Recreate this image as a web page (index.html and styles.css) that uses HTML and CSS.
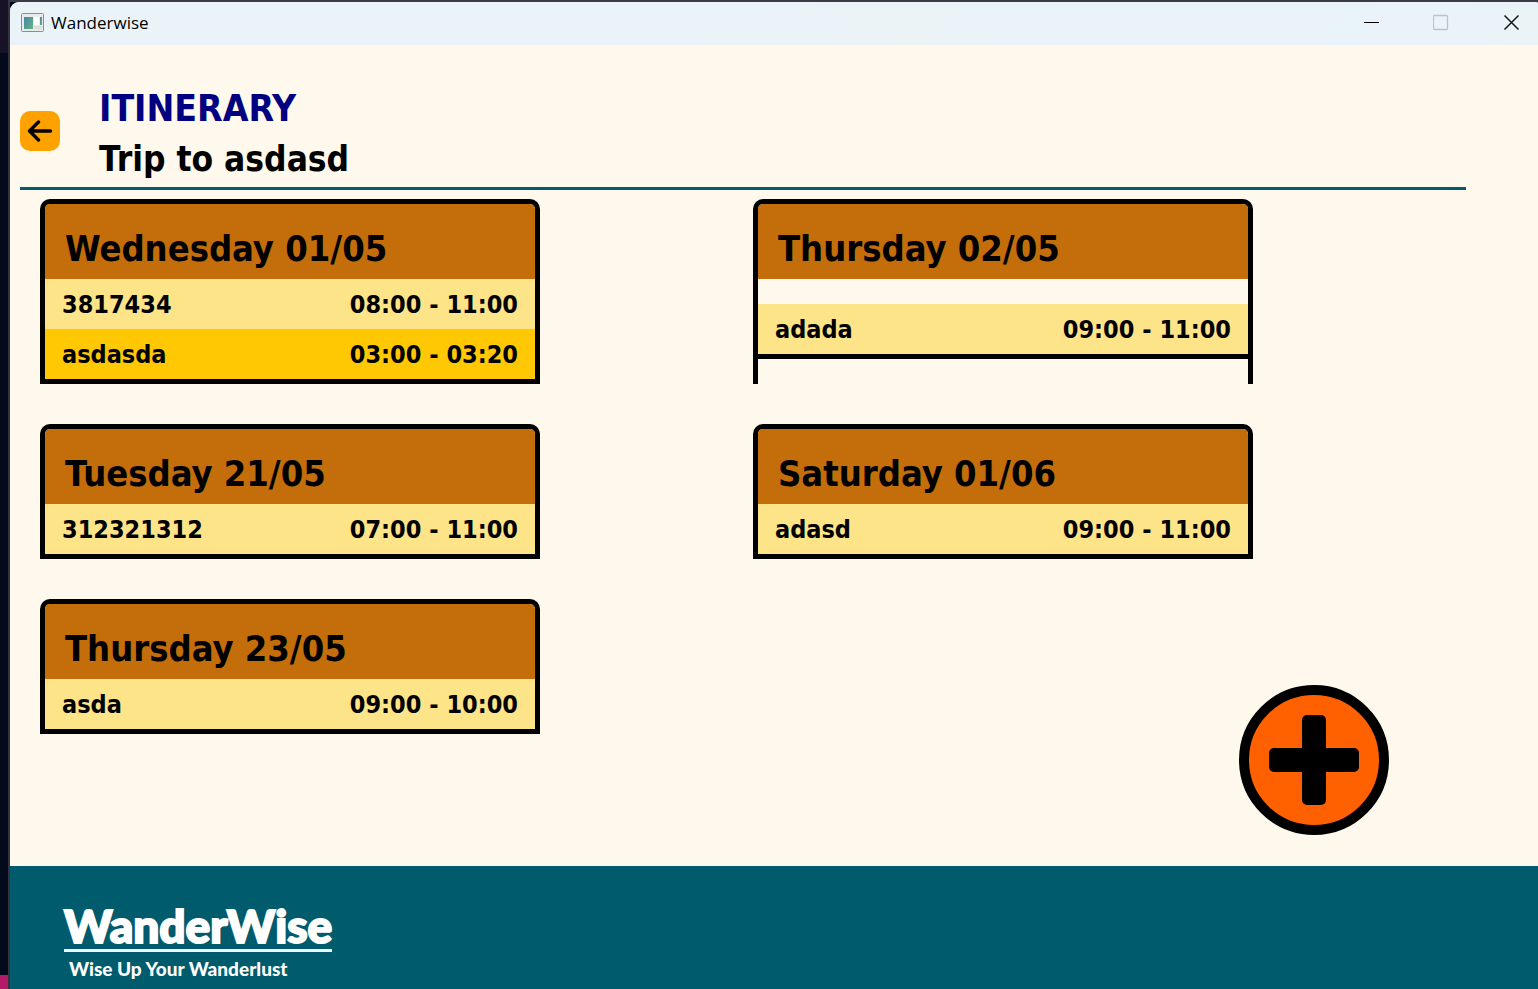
FILE: index.html
```html
<!DOCTYPE html>
<html lang="en">
<head>
<meta charset="utf-8">
<title>Wanderwise</title>
<link rel="stylesheet" href="styles.css">
</head>
<body>
<div class="window">
  <div class="titlebar">
    <svg class="app-icon" width="23" height="19" viewBox="0 0 23 19" aria-hidden="true">
      <defs>
        <linearGradient id="pane" x1="0" y1="0" x2="1" y2="1">
          <stop offset="0" stop-color="#4a86a8"/>
          <stop offset="1" stop-color="#63b286"/>
        </linearGradient>
      </defs>
      <rect x="0.5" y="0.5" width="22" height="18" rx="1" fill="#e9eaea" stroke="#8b8e90"/>
      <rect x="3" y="4" width="9" height="12" fill="url(#pane)"/>
      <rect x="13" y="4" width="5" height="8" fill="#fff"/>
      <rect x="19" y="4" width="2" height="8" fill="url(#pane)"/>
      <rect x="13" y="13" width="8" height="3" fill="#dcdddd"/>
    </svg>
    <span class="app-name">Wanderwise</span>
    <div class="controls">
      <button type="button" aria-label="Minimize"><svg width="17" height="17" viewBox="0 0 17 17"><path d="M1 8.500H16" stroke="#000"/></svg></button>
      <button type="button" aria-label="Maximize" disabled><svg width="17" height="17" viewBox="0 0 17 17"><rect x="0.500" y="1.500" width="14" height="14" rx="1" fill="none" stroke="#bcc4c6" stroke-width="1.300"/></svg></button>
      <button type="button" aria-label="Close"><svg width="17" height="17" viewBox="0 0 17 17"><path d="M1.500 1.500L15.500 15.500M15.500 1.500L1.500 15.500" stroke="#15171c" stroke-width="1.500"/></svg></button>
    </div>
  </div>

  <main class="content">
    <header class="page-header">
      <button class="back" type="button" aria-label="Back">
        <svg width="26" height="22" viewBox="0 0 26 22" fill="none" stroke="#000" stroke-width="3.400" stroke-linecap="round" stroke-linejoin="round"><path d="M23.500 11H3M11.500 2L2.500 11L11.500 20"/></svg>
      </button>
      <div class="headings">
        <h1 class="heading section">ITINERARY</h1>
        <p class="heading">Trip to asdasd</p>
      </div>
    </header>

    <div class="days">
      <section class="day">
        <h2 class="day-title">Wednesday 01/05</h2>
        <ul class="entries">
          <li class="entry"><span>3817434</span><span>08:00 - 11:00</span></li>
          <li class="entry"><span>asdasda</span><span>03:00 - 03:20</span></li>
        </ul>
      </section>
      <section class="day">
        <h2 class="day-title">Thursday 02/05</h2>
        <ul class="entries">
          <li class="entry"><span>adada</span><span>09:00 - 11:00</span></li>
        </ul>
      </section>
      <section class="day">
        <h2 class="day-title">Tuesday 21/05</h2>
        <ul class="entries">
          <li class="entry"><span>312321312</span><span>07:00 - 11:00</span></li>
        </ul>
      </section>
      <section class="day">
        <h2 class="day-title">Saturday 01/06</h2>
        <ul class="entries">
          <li class="entry"><span>adasd</span><span>09:00 - 11:00</span></li>
        </ul>
      </section>
      <section class="day">
        <h2 class="day-title">Thursday 23/05</h2>
        <ul class="entries">
          <li class="entry"><span>asda</span><span>09:00 - 10:00</span></li>
        </ul>
      </section>
    </div>

    <button class="add" type="button" aria-label="Add activity">
      <svg width="90" height="90" viewBox="0 0 90 90"><rect x="33" width="24" height="90" rx="5"/><rect y="33" width="90" height="24" rx="5"/></svg>
    </button>
  </main>

  <footer class="footer">
    <div class="brand">
      <div class="brand-name">WanderWise</div>
      <div class="tagline">Wise Up Your Wanderlust</div>
    </div>
  </footer>
</div>
</body>
</html>
```
FILE: styles.css
```css
* { box-sizing: border-box; }

body {
  margin: 0;
  min-height: 100vh;
  display: flex;
  padding: 2px 0 0 10px;
  background:
    linear-gradient(#3b3a46, #3b3a46) 9px 0 / 100% 2px no-repeat,
    linear-gradient(#33343d, #33343d) 8px 0 / 2px 100% no-repeat,
    linear-gradient(#b51a68, #b51a68) 0 100% / 8px 14px no-repeat,
    linear-gradient(#171226, #171226) 0 0 / 8px 53px no-repeat,
    #020a1c;
  font-family: "DejaVu Sans Condensed", "DejaVu Sans", sans-serif;
  color: #000;
}

h1, h2, p, ul { margin: 0; padding: 0; }
ul { list-style: none; }

button {
  padding: 0;
  border: 0;
  background: none;
  display: flex;
  align-items: center;
  justify-content: center;
}

.window {
  flex: 1;
  display: flex;
  flex-direction: column;
  border-radius: 9px 2px 0 0;
  overflow: hidden;
  background: #fff8ec;
}

.titlebar {
  height: 43px;
  display: flex;
  align-items: center;
  gap: 7px;
  padding: 0 0 2px 11px;
  background: linear-gradient(90deg, #eaf4f8, #ebf3f7 60%, #e9f3fa 88%, #eaf4f7);
}

.app-name {
  font-family: "Open Sans", "Noto Sans", sans-serif;
  font-size: 17px;
}

.controls {
  margin: 0 -9px 0 auto;
  display: flex;
  align-self: stretch;
}

.controls button { width: 70px; }
.controls button:last-child { width: 71px; }

.content {
  flex: 1;
  position: relative;
  padding: 38px 72px 40px 10px;
}

.page-header {
  display: flex;
  gap: 39px;
  padding-bottom: 2px;
  border-bottom: 3px solid #005b6c;
}

.back {
  width: 40px;
  height: 40px;
  margin-top: 28px;
  border-radius: 10px;
  background: #ffa200;
}

.heading {
  font-size: 35px;
  font-weight: bold;
  line-height: 51px;
}

.section {
  color: #000080;
  font-size: 37px;
}

.days {
  display: grid;
  grid-template-columns: 1fr 1fr;
  row-gap: 40px;
  padding: 9px 0 0 20px;
}

.day {
  width: 100%;
  max-width: 500px;
  display: flex;
  flex-direction: column;
  border: 5px solid #000;
  border-bottom: 0;
  border-radius: 10px 10px 0 0;
}

.day-title {
  padding: 19px 20px 5px;
  border-radius: 5px 5px 0 0;
  background: #c36e0b;
  font-size: 36px;
  line-height: 51px;
}

.entries {
  margin: auto 0;
  border-bottom: 5px solid #000;
}

.entry {
  display: flex;
  justify-content: space-between;
  padding: 2px 17px 0;
  background: #fde489;
  font-size: 25px;
  font-weight: bold;
  line-height: 48px;
}

.entry:nth-child(even) { background: #ffc803; }

.add {
  position: absolute;
  right: 149px;
  bottom: 31px;
  width: 150px;
  height: 150px;
  border: 10px solid #000;
  border-radius: 50%;
  background: #ff6000;
}

.footer {
  min-height: 123px;
  display: flex;
  padding: 37px 54px 0;
  background: #005b6c;
  color: #fff;
  font-family: Lato, sans-serif;
}

.brand-name {
  border-bottom: 3px solid #e9fbff;
  font-size: 46px;
  font-weight: 900;
  line-height: 46px;
  -webkit-text-stroke: 2px #fff;
}

.tagline {
  padding: 5px 5px 0;
  font-size: 19px;
  font-weight: 900;
  line-height: 24px;
}
```
